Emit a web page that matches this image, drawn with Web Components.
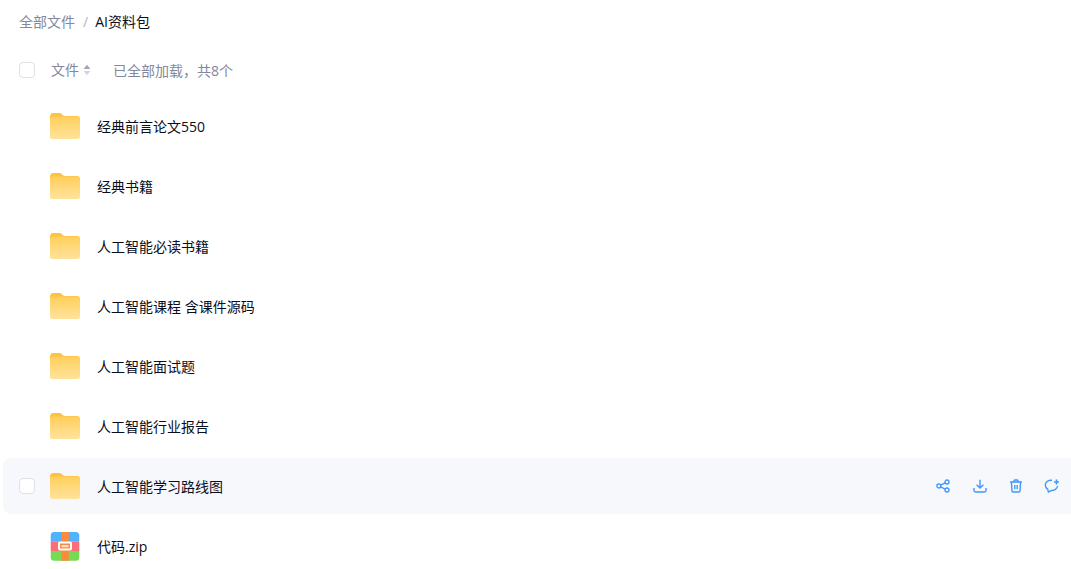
<!DOCTYPE html>
<html lang="zh-CN"><head><meta charset="utf-8"><title>AI资料包</title>
<style>
html,body{margin:0;padding:0;background:#fff;overflow:hidden}
body{font-family:"Open Sans","Noto Sans CJK SC",sans-serif;font-size:14px;color:#0a0d1c}
</style></head><body>
<file-page>
<file-crumbs></file-crumbs>
<file-head></file-head>
<file-list>
<file-row name="经典前言论文550"></file-row>
<file-row name="经典书籍"></file-row>
<file-row name="人工智能必读书籍"></file-row>
<file-row name="人工智能课程 含课件源码"></file-row>
<file-row name="人工智能面试题"></file-row>
<file-row name="人工智能行业报告"></file-row>
<file-row name="人工智能学习路线图" active></file-row>
<file-row name="代码.zip" type="zip"></file-row>
</file-list>
</file-page>
<script>
function def(tag,html,init){customElements.define(tag,class extends HTMLElement{connectedCallback(){if(this.shadowRoot)return;const r=this.attachShadow({mode:'open'});r.innerHTML=html;init&&init(this,r)}})}
def('file-page',`<style>:host{display:block;height:569px;overflow:hidden;padding-left:3px;box-sizing:border-box}</style><slot></slot>`);
def('file-list',`<style>:host{display:flex;flex-direction:column;gap:4px;padding-top:12px}</style><slot></slot>`);
def('file-crumbs',`<style>:host{display:flex;align-items:center;height:20px;padding:12px 0 0 16px;line-height:20px;white-space:nowrap}
.a{color:#84889a}.s{color:#b0b3c2;margin:0 7px 0 8px}.c{color:#0a0d1c}</style><span class="a">全部文件</span><span class="s">/</span><span class="c">AI资料包</span>`);
def('file-head',`<style>:host{display:flex;align-items:center;height:32px;margin-top:22px;padding-left:16px;white-space:nowrap;color:#84889a;line-height:20px}
.box{width:14px;height:14px;border:1px solid #dfe1e8;border-radius:4px;background:#fff}
.t{margin-left:16px}svg{margin-left:4px;display:block}.n{margin-left:22px;padding-top:2px}</style>
<span class="box"></span><span class="t">文件</span><svg width="8" height="12" viewBox="0 0 8 12"><path d="M4 .8 7.400 5H.6z" fill="#a3a6b5"/><path d="M4 11.200 .6 7h6.800z" fill="#d3d5dd"/></svg><span class="n">已全部加载，共8个</span>`);
const folder=`<svg width="32" height="28" viewBox="0 0 32 28"><defs><linearGradient id="g" x1="0" y1="0" x2="0" y2="1"><stop offset="0" stop-color="#ffcf5c"/><stop offset="1" stop-color="#ffe39c"/></linearGradient></defs><path d="M1 4.500C1 2.600 2.400 1 4.300 1h5.500c1.300 0 2.300.5 3.200 1.300L15 4h13c1.700 0 3 1.300 3 3v2H1z" fill="#ffc23d"/><rect x="1" y="4.500" width="30" height="22.500" rx="2.500" fill="url(#g)"/></svg>`;
const zip=`<svg width="32" height="30" viewBox="0 0 32 30"><defs><clipPath id="c"><rect x="1.700" y="1" width="28.600" height="28.800" rx="3.500"/></clipPath></defs><g clip-path="url(#c)"><rect x="1" y="1" width="30" height="9.300" fill="#4fb2fb"/><rect x="1" y="10.300" width="30" height="9.700" fill="#fb6e77"/><rect x="1" y="20" width="30" height="10" fill="#74dc54"/><rect x="12.300" y="1" width="7.500" height="29" fill="#fb8a3c"/></g><rect x="10" y="11.500" width="12" height="7" rx="1" fill="#fb8a3c" stroke="#fff" stroke-width="2"/><rect x="12.500" y="14" width="7" height="2.300" fill="#ffe0c8"/></svg>`;
const C='#4097fb';
const acts=`<svg width="14" height="14" viewBox="0 0 14 14" fill="none" stroke="${C}" stroke-width="1.300"><circle cx="2.800" cy="7" r="2"/><circle cx="11" cy="3" r="2"/><circle cx="11" cy="11" r="2"/><path d="M4.600 6.100 9.200 3.900M4.600 7.900l4.600 2.200"/></svg>
<svg width="14" height="14" viewBox="0 0 14 14" fill="none" stroke="${C}" stroke-width="1.400"><path d="M7 .8v8M3.600 5.800 7 9l3.400-3.200"/><path d="M1 9v2.300c0 1 .7 1.700 1.700 1.700h8.600c1 0 1.700-.7 1.700-1.700V9"/></svg>
<svg width="14" height="14" viewBox="0 0 14 14" fill="none" stroke="${C}" stroke-width="1.400"><path d="M1 3h12M5 2.800V1.800c0-.5.300-.8.800-.8h2.400c.5 0 .8.300.8.800v1M2.400 3l.6 9c0 .6.500 1 1.100 1h5.800c.6 0 1.100-.4 1.100-1l.6-9M5.800 6v4.200M8.200 6v4.200"/></svg>
<svg width="16" height="14" viewBox="0 0 16 14" fill="none" stroke="${C}" stroke-width="1.400"><path d="M8 1.300H6.500C3.600 1.300 1.300 3.400 1.300 6.100c0 1.700 1 3.200 2.400 4.100L4.400 13l3-1.600c3 .3 5.800-1.500 6.100-4.400"/><path d="M12.500.5v5M10 3h5" stroke-width="1.600"/></svg>`;
def('file-row',`<style>:host{display:flex;align-items:center;box-sizing:border-box;height:56px;padding-left:16px;border-radius:8px 0 0 8px;white-space:nowrap;color:#0a0d1c}
:host([active]){background:#f7f8fc}
.box{width:14px;height:14px;border:1px solid #dfe1e8;border-radius:4px;background:#fff;flex:none;visibility:hidden}
:host([active]) .box{visibility:visible}
.ic{width:32px;height:30px;margin-left:14px;display:flex;align-items:center;justify-content:center;flex:none}
.n{margin-left:16px;flex:1;line-height:20px;padding-top:2px}
.acts{display:none;align-items:center;gap:23px;padding-right:11px}
.acts svg:nth-child(3){margin-left:-1px}
.acts svg:last-child{margin-left:-2px}
:host([active]) .acts{display:flex}svg{display:block}</style>
<span class="box"></span><span class="ic"></span><span class="n"></span><span class="acts">${acts}</span>`,(h,r)=>{
r.querySelector('.n').textContent=h.getAttribute('name');
r.querySelector('.ic').innerHTML=h.getAttribute('type')==='zip'?zip:folder;
});
</script></body></html>
